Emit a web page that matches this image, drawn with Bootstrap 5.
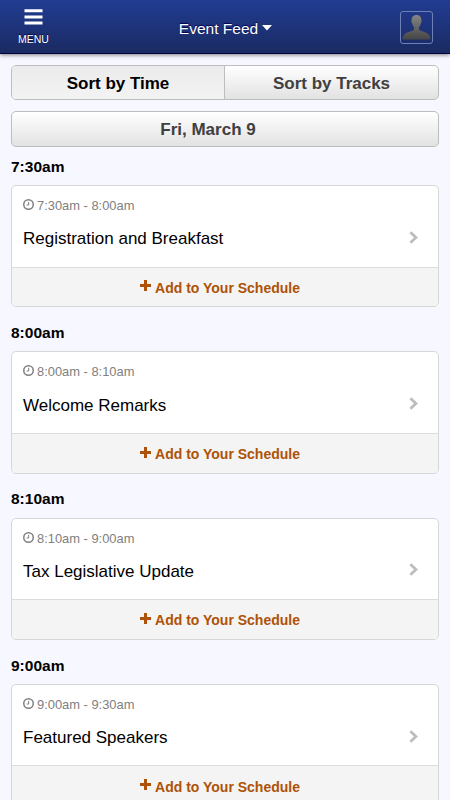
<!DOCTYPE html>
<html lang="en">
<head>
<meta charset="utf-8">
<meta name="viewport" content="width=device-width, initial-scale=1">
<title>Event Feed</title>
<link href="https://cdn.jsdelivr.net/npm/bootstrap@5.3.0/dist/css/bootstrap.min.css" rel="stylesheet">
<style>
html, body { height: 100%; }
body { background: #f7f7ff; color: #000; font-family: "Liberation Sans", Arial, sans-serif; line-height: 1.2; overflow: hidden; }
.topbar { height: 54px; background: linear-gradient(#213c92, #1a2a62); border-bottom: 1px solid #00003c; box-shadow: 0 1px 4px rgba(0,0,0,.5); color: #fff; text-shadow: 0 -1px 1px #000050; }
.menu-btn { width: 67px; font-size: 10.5px; line-height: 13px; padding-top: 9px; }
.menu-btn svg { margin-bottom: 8px; }
.feed-title { font-size: 15.5px; padding-top: 6px; padding-left: 1px; }
.avatar { width: 33px; height: 33px; margin: 11px 17px 0 17px; border: 1px solid #6f80b9; border-radius: 3px; }
.feed { padding: 11px 11px 0; }
.sorter { height: 35px; }
.date-bar { height: 36px; margin-top: 11px; padding-right: 34px; padding-top: 2px; }
.silver { border: 1px solid #bdbdbd; border-radius: 5px; background: linear-gradient(#fff, #e2e2e2); color: #404040; font-weight: 700; font-size: 17px; }
.sort-item { padding-top: 4px; }
.sort-on { background: linear-gradient(#ebebeb, #f3f3f3); color: #000; border-right: 1px solid #bdbdbd; }
.slot-time { height: 38px; font-size: 15.5px; font-weight: 700; padding-top: 2px; }
.session { height: 122.33px; margin-bottom: 6px; border: 1px solid #d7d7d7; border-radius: 5px; }
.session-main { height: 80.5px; padding: 12px 20px 0 11px; }
.session-hours { font-size: 12.9px; line-height: 15px; color: #808080; gap: 3px; }
.session-hours svg { margin-top: 1px; }
.session-name { font-size: 17px; line-height: 20px; margin-top: 16.4px; }
.session-main > svg { margin-top: 10px; }
.session-add { background: #f4f4f4; border-top: 1px solid #dcdcdc; color: #ae5207; font-size: 14px; font-weight: 700; gap: 4px; border-radius: 0 0 4px 4px; padding: 2px 10px 0 0; }
</style>
</head>
<body>
<svg class="d-none">
  <symbol id="clock" viewBox="0 0 11 11"><circle cx="5.5" cy="5.5" r="4.75" fill="none" stroke="#808080" stroke-width="1.5"/><path d="M5.7 2.8V6H3.6" fill="none" stroke="#808080" stroke-width="1"/></symbol>
  <symbol id="chevron" viewBox="0 0 9 13"><path d="M1.4 1.3L6.9 6.500L1.400 11.7" fill="none" stroke="#bdbdbd" stroke-width="2.8"/></symbol>
  <symbol id="plus" viewBox="0 0 11 11"><path d="M4 0h3v4h4v3H7v4H4V7H0V4h4z" fill="#ae5207"/></symbol>
</svg>
<header class="topbar d-flex position-relative">
  <div class="menu-btn d-flex flex-column align-items-center">
    <svg width="19" height="16"><path d="M.5 1.7h18M.5 7.9h18M.5 14.1h18" stroke="#fff" stroke-width="3" stroke-linecap="butt"/></svg>
    MENU
  </div>
  <div class="feed-title flex-grow-1 d-flex align-items-center justify-content-center"><span>Event Feed</span><svg class="ms-1 mb-1" width="10" height="6"><path d="M0 0h10L5 5.5z" fill="#fff"/></svg></div>
  <div class="avatar"><svg class="d-block" width="31" height="31" viewBox="0 0 31 31"><defs><linearGradient id="person" x2="0" y2="1"><stop stop-color="#858585"/><stop offset="1" stop-color="#464646"/></linearGradient></defs><path d="M15.5 3c-3.300 0-5 2.200-4.900 5.500-.5 1 0 2.400.7 3 .2 1.600.7 2.700 1.700 3.700v2.300c-1.500 2-6.500 2.200-9 4.300C2.300 23.200 1.700 25 1.500 27.500h28c-.2-2.500-.8-4.300-2.500-5.700-2.500-2.100-7.500-2.300-9-4.300v-2.300c1-1 1.500-2.100 1.700-3.700.7-.6 1.200-2 .7-3C20.500 5.200 18.800 3 15.500 3z" fill="url(#person)"/></svg></div>
</header>
<main class="feed">
  <div class="sorter silver d-flex overflow-hidden">
    <div class="sort-item sort-on w-50 d-flex align-items-center justify-content-center">Sort by Time</div>
    <div class="sort-item w-50 d-flex align-items-center justify-content-center">Sort by Tracks</div>
  </div>
  <div class="date-bar silver d-flex align-items-center justify-content-center">Fri, March 9</div>

  <section>
    <div class="slot-time d-flex align-items-center">7:30am</div>
    <div class="session bg-white d-flex flex-column">
      <div class="session-main d-flex justify-content-between align-items-center flex-shrink-0">
        <div class="align-self-start"><div class="session-hours d-flex"><svg width="11" height="11"><use href="#clock"/></svg><span>7:30am - 8:00am</span></div><div class="session-name">Registration and Breakfast</div></div>
        <svg width="9" height="13"><use href="#chevron"/></svg>
      </div>
      <div class="session-add flex-grow-1 d-flex align-items-center justify-content-center"><svg class="mb-1" width="11" height="11"><use href="#plus"/></svg><span>Add to Your Schedule</span></div>
    </div>
  </section>
  <section>
    <div class="slot-time d-flex align-items-center">8:00am</div>
    <div class="session bg-white d-flex flex-column">
      <div class="session-main d-flex justify-content-between align-items-center flex-shrink-0">
        <div class="align-self-start"><div class="session-hours d-flex"><svg width="11" height="11"><use href="#clock"/></svg><span>8:00am - 8:10am</span></div><div class="session-name">Welcome Remarks</div></div>
        <svg width="9" height="13"><use href="#chevron"/></svg>
      </div>
      <div class="session-add flex-grow-1 d-flex align-items-center justify-content-center"><svg class="mb-1" width="11" height="11"><use href="#plus"/></svg><span>Add to Your Schedule</span></div>
    </div>
  </section>
  <section>
    <div class="slot-time d-flex align-items-center">8:10am</div>
    <div class="session bg-white d-flex flex-column">
      <div class="session-main d-flex justify-content-between align-items-center flex-shrink-0">
        <div class="align-self-start"><div class="session-hours d-flex"><svg width="11" height="11"><use href="#clock"/></svg><span>8:10am - 9:00am</span></div><div class="session-name">Tax Legislative Update</div></div>
        <svg width="9" height="13"><use href="#chevron"/></svg>
      </div>
      <div class="session-add flex-grow-1 d-flex align-items-center justify-content-center"><svg class="mb-1" width="11" height="11"><use href="#plus"/></svg><span>Add to Your Schedule</span></div>
    </div>
  </section>
  <section>
    <div class="slot-time d-flex align-items-center">9:00am</div>
    <div class="session bg-white d-flex flex-column">
      <div class="session-main d-flex justify-content-between align-items-center flex-shrink-0">
        <div class="align-self-start"><div class="session-hours d-flex"><svg width="11" height="11"><use href="#clock"/></svg><span>9:00am - 9:30am</span></div><div class="session-name">Featured Speakers</div></div>
        <svg width="9" height="13"><use href="#chevron"/></svg>
      </div>
      <div class="session-add flex-grow-1 d-flex align-items-center justify-content-center"><svg class="mb-1" width="11" height="11"><use href="#plus"/></svg><span>Add to Your Schedule</span></div>
    </div>
  </section>
</main>
<script src="https://cdn.jsdelivr.net/npm/bootstrap@5.3.0/dist/js/bootstrap.bundle.min.js"></script>
</body>
</html>
